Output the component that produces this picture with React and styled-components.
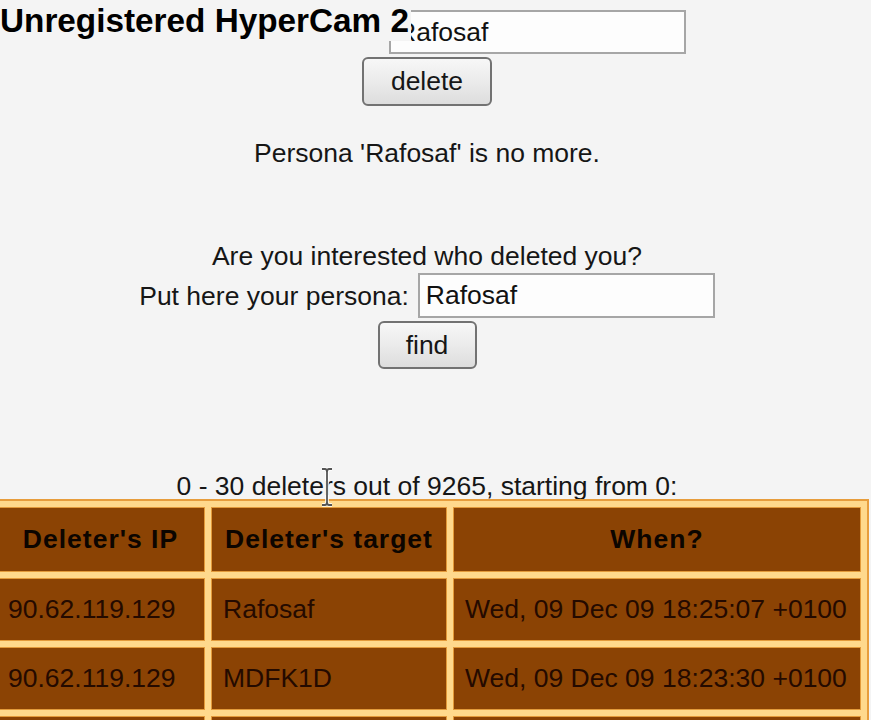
import React from "react";
import styled, { createGlobalStyle } from "styled-components";

const Global = createGlobalStyle`
  html, body { margin: 0; padding: 0; background: #f4f4f4; overflow: hidden; }
  body { font-family: "Liberation Sans", Arial, sans-serif; color: #161616; }
`;

const Page = styled.div`
  position: relative;
  width: 854px;
  padding-top: 10px;
  display: flex;
  flex-direction: column;
  align-items: center;
  font-size: 26.5px;
`;

const FormRow = styled.div`
  display: flex;
  align-items: center;
  gap: ${(p) => p.$gap}px;
  margin-top: ${(p) => p.$mt || 0}px;
`;

const Label = styled.label`
  line-height: 30px;
  white-space: nowrap;
`;

const TextInput = styled.input`
  box-sizing: border-box;
  width: 297px;
  height: ${(p) => p.$h}px;
  border: 2px solid #a6a6a6;
  background: #fdfdfd;
  font-family: inherit;
  font-size: 26.5px;
  padding: 0 6px;
  color: #111;
  outline: none;
`;

const Button = styled.button`
  box-sizing: border-box;
  width: ${(p) => p.$w}px;
  height: ${(p) => p.$h}px;
  margin-top: 3px;
  border: 2px solid #727272;
  border-radius: 6px;
  background: linear-gradient(#f7f7f7, #ebebeb 50%, #dddddd);
  font-family: inherit;
  font-size: 26.5px;
  color: #161616;
  padding: 0;
`;

const Text = styled.p`
  margin: ${(p) => p.$mt}px 0 0;
  line-height: ${(p) => p.$lh || 30}px;
  white-space: nowrap;
`;

const Table = styled.table`
  align-self: flex-start;
  margin-left: -12px;
  margin-top: -1px;
  width: 881px;
  table-layout: fixed;
  border-collapse: separate;
  border-spacing: 6px;
  background: #ffd98c;
  border: 2px solid #e79d3c;
`;

const HeadCell = styled.th`
  box-sizing: border-box;
  height: 65px;
  padding: 0;
  background: #8b4304;
  border: 1px solid #e39a3a;
  font-weight: bold;
  letter-spacing: 1px;
  color: #0c0500;
  text-align: center;
  vertical-align: middle;
`;

const Cell = styled.td`
  box-sizing: border-box;
  height: 63px;
  padding: 0 11px;
  background: #8b4304;
  border: 1px solid #e39a3a;
  color: #240a00;
  text-align: left;
  vertical-align: middle;
  white-space: nowrap;
  overflow: hidden;
`;

const Watermark = styled.div`
  position: absolute;
  top: 0;
  left: 0;
  width: 411px;
  height: 41px;
  box-sizing: border-box;
  padding-top: 4px;
  background: #f4f4f4;
  overflow: hidden;
  font-weight: bold;
  font-size: 33.3px;
  line-height: 1;
  color: #000;
  white-space: nowrap;
`;

const Cursor = styled.svg`
  position: absolute;
  left: 320px;
  top: 467px;
`;

const rows = [
  ["90.62.119.129", "Rafosaf", "Wed, 09 Dec 09 18:25:07 +0100"],
  ["90.62.119.129", "MDFK1D", "Wed, 09 Dec 09 18:23:30 +0100"],
  ["90.62.119.129", "Rafosaf", "Wed, 09 Dec 09 18:21:12 +0100"],
];

export default function App() {
  return (
    <>
      <Global />
      <Page>
        <FormRow $gap={6}>
          <Label>Persona to delete:</Label>
          <TextInput $h={44} defaultValue="Rafosaf" />
        </FormRow>
        <Button $w={130} $h={49}>delete</Button>
        <Text $mt={32}>Persona 'Rafosaf' is no more.</Text>
        <Text $mt={73}>Are you interested who deleted you?</Text>
        <FormRow $gap={9} $mt={2}>
          <Label>Put here your persona:</Label>
          <TextInput $h={45} defaultValue="Rafosaf" />
        </FormRow>
        <Button $w={99} $h={48}>find</Button>
        <Text $mt={103} $lh={28}>0 - 30 deleters out of 9265, starting from 0:</Text>
        <Table>
          <colgroup>
            <col style={{ width: 209 }} />
            <col style={{ width: 236 }} />
            <col style={{ width: 408 }} />
          </colgroup>
          <thead>
            <tr>
              <HeadCell>Deleter's IP</HeadCell>
              <HeadCell>Deleter's target</HeadCell>
              <HeadCell>When?</HeadCell>
            </tr>
          </thead>
          <tbody>
            {rows.map((r, i) => (
              <tr key={i}>
                <Cell>{r[0]}</Cell>
                <Cell>{r[1]}</Cell>
                <Cell>{r[2]}</Cell>
              </tr>
            ))}
          </tbody>
        </Table>
        <Watermark>Unregistered HyperCam 2</Watermark>
        <Cursor width="14" height="40" viewBox="0 0 14 40">
          <path d="M2 2 H5 Q7 2 7 5 V35 Q7 38 5 38 H2 M12 2 H9 Q7 2 7 5 M7 35 Q7 38 9 38 H12"
            fill="none" stroke="#ffffff" strokeWidth="3.5" />
          <path d="M2 2 H5 Q7 2 7 5 V35 Q7 38 5 38 H2 M12 2 H9 Q7 2 7 5 M7 35 Q7 38 9 38 H12"
            fill="none" stroke="#555" strokeWidth="1.8" />
        </Cursor>
      </Page>
    </>
  );
}
